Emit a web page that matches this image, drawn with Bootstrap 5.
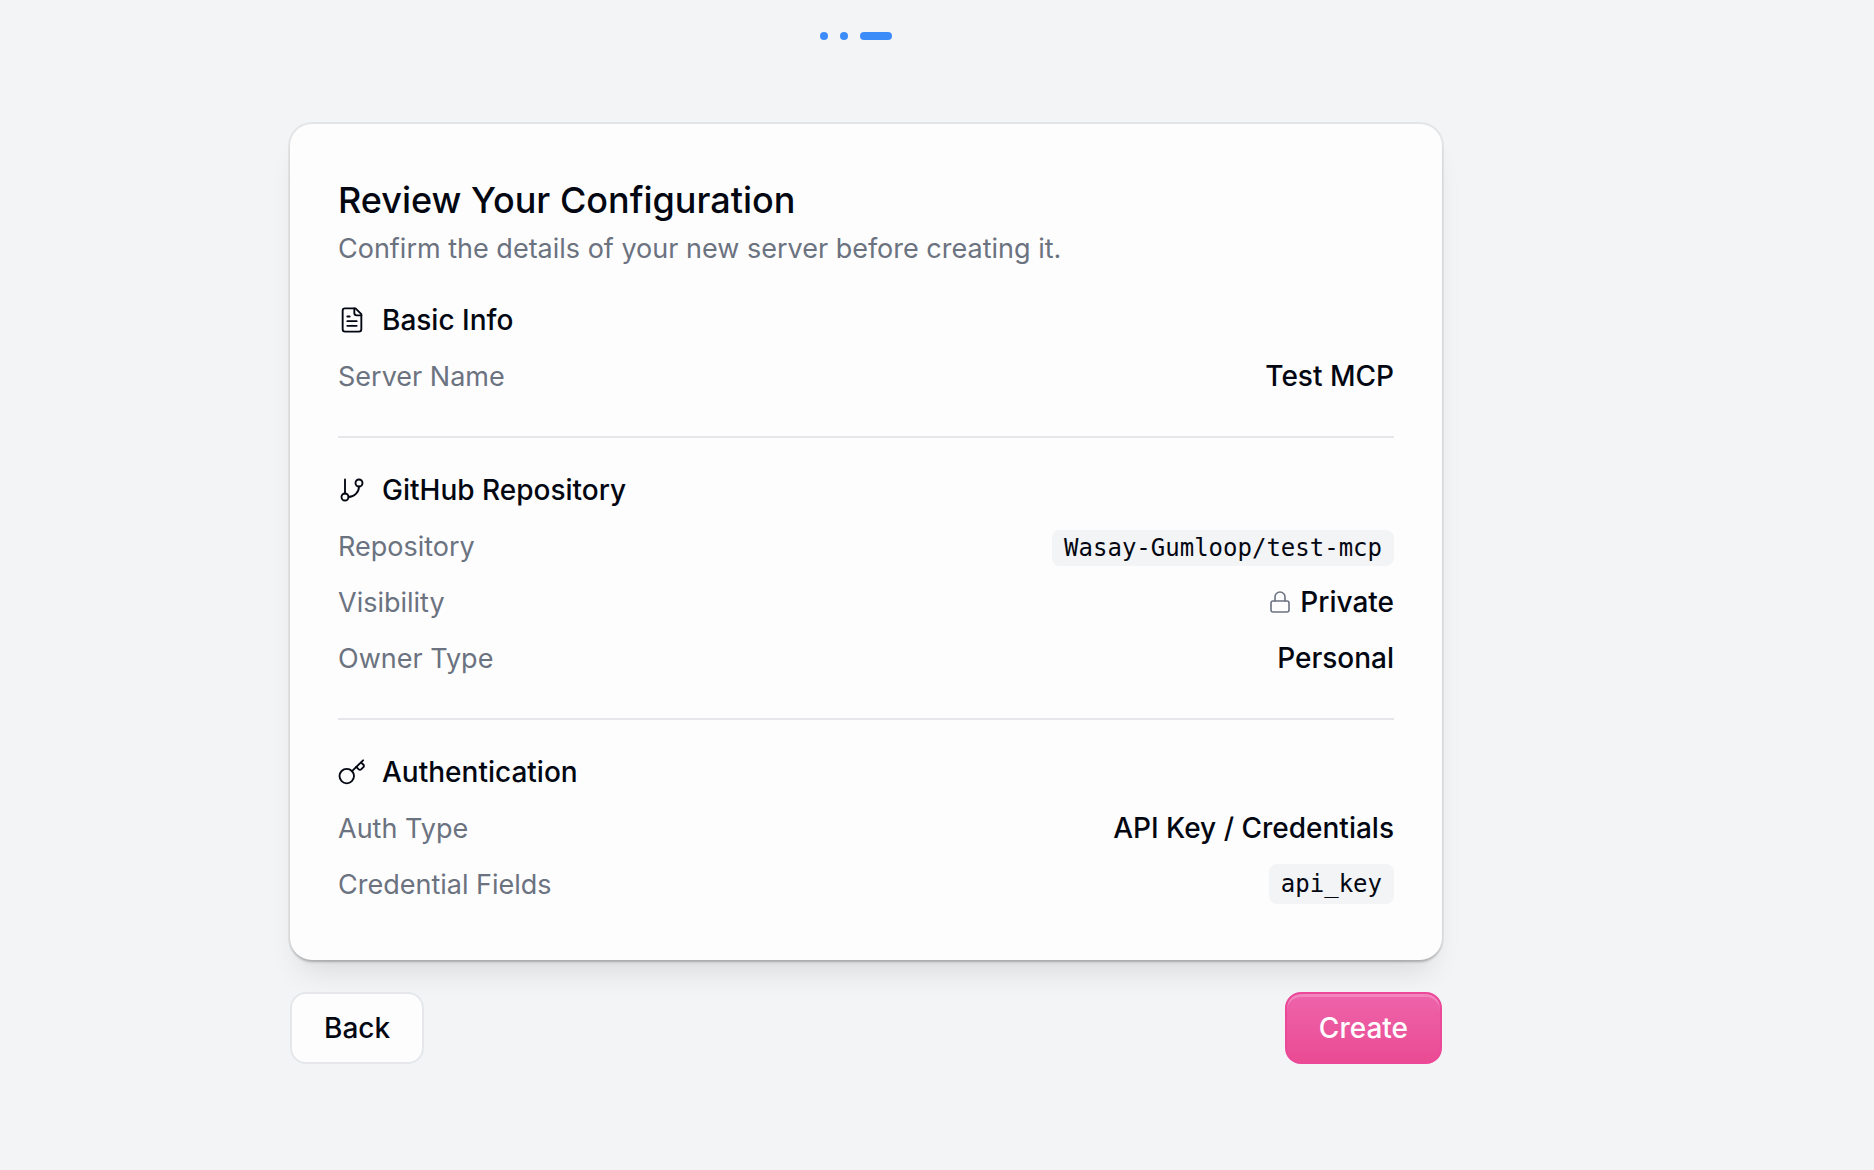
<!DOCTYPE html>
<html lang="en">
<head>
<meta charset="utf-8">
<meta name="viewport" content="width=device-width, initial-scale=1">
<title>Review Your Configuration</title>
<link href="https://cdn.jsdelivr.net/npm/bootstrap@5.3.0/dist/css/bootstrap.min.css" rel="stylesheet">
<style>
  body { background: #f3f4f6; color: #030712; font-family: Inter, "Liberation Sans", sans-serif; font-size: 27px; line-height: 40px; }
  .steps { padding: 32px 162px 0 0; gap: 12px; }
  .step { width: 8px; height: 8px; background: #3b8cf8; }
  .step-current { width: 32px; }
  .wizard { padding: 84px 142px 64px 0; }
  .wizard-inner { width: 100%; max-width: 1152px; }
  .review-card { background: #fdfdfd; border-radius: 22px; padding: 48px 48px 56px; margin-bottom: 32px;
    box-shadow: 0 0 0 2px rgba(0,0,0,.06), 0 3px 3px -1px rgba(0,0,0,.2), 0 20px 30px -10px rgba(0,0,0,.11); }
  .review-title { font-size: 36px; line-height: 56px; font-weight: 500; }
  .review-note { line-height: 42px; margin-bottom: 30px; }
  .soft { color: #6b7280; }
  .section-title { font-size: 28px; line-height: 40px; font-weight: 500; gap: 16px; }
  .review-section + .review-section { border-top: 2px solid #e5e7eb; margin-top: 40px; padding-top: 32px; }
  .line { margin-top: 16px; }
  .line dt { font-weight: 400; line-height: 38px; }
  .line dd { font-size: 28px; font-weight: 500; gap: 8px; }
  .chip { background: #f3f4f6; color: #030712; border-radius: 8px; padding: 0 12px; font: 400 24px/40px "DejaVu Sans Mono", monospace; }
  .chip-slim { line-height: 36px; }
  .ico { width: 28px; height: 28px; fill: none; stroke: currentColor; stroke-width: 1.6; stroke-linecap: round; stroke-linejoin: round; }
  .ico-sm { width: 24px; height: 24px; }
  .act { font-size: 28px; line-height: 40px; font-weight: 500; padding: 14px 32px; border-width: 2px; border-radius: 16px; }
  .act-back { background: #fdfdfd; color: #030712; border-color: #e5e7eb; }
  .act-create { color: #fff; border-color: #ec4899; background: linear-gradient(#ee64ab, #ea4b93) padding-box, #ec4899; box-shadow: inset 0 3px 0 rgba(255,255,255,.22); }
</style>
</head>
<body>
<nav class="steps d-flex justify-content-center" aria-label="Progress">
  <span class="step rounded-pill"></span>
  <span class="step rounded-pill"></span>
  <span class="step step-current rounded-pill"></span>
</nav>
<main class="wizard d-flex justify-content-center">
  <div class="wizard-inner">
    <div class="review-card">
      <h1 class="review-title mb-0">Review Your Configuration</h1>
      <p class="review-note soft">Confirm the details of your new server before creating it.</p>

      <section class="review-section">
        <h2 class="section-title d-flex align-items-center mb-0">
          <svg class="ico" viewBox="0 0 24 24" aria-hidden="true"><path d="M15 2H6a2 2 0 0 0-2 2v16a2 2 0 0 0 2 2h12a2 2 0 0 0 2-2V7Z"/><path d="M14 2v4a2 2 0 0 0 2 2h4"/><path d="M10 9H8"/><path d="M16 13H8"/><path d="M16 17H8"/></svg>
          Basic Info
        </h2>
        <dl class="mb-0">
          <div class="line d-flex justify-content-between align-items-end"><dt class="soft">Server Name</dt><dd class="mb-0">Test MCP</dd></div>
        </dl>
      </section>

      <section class="review-section">
        <h2 class="section-title d-flex align-items-center mb-0">
          <svg class="ico" viewBox="0 0 24 24" aria-hidden="true"><path d="M6 3v12"/><circle cx="18" cy="6" r="3"/><circle cx="6" cy="18" r="3"/><path d="M18 9a9 9 0 0 1-9 9"/></svg>
          GitHub Repository
        </h2>
        <dl class="mb-0">
          <div class="line d-flex justify-content-between align-items-end"><dt class="soft">Repository</dt><dd class="d-flex mb-0 pt-1"><code class="chip chip-slim">Wasay-Gumloop/test-mcp</code></dd></div>
          <div class="line d-flex justify-content-between align-items-end"><dt class="soft">Visibility</dt><dd class="d-flex align-items-center mb-0">
            <svg class="ico ico-sm soft" viewBox="0 0 24 24" aria-hidden="true"><rect x="3" y="11" width="18" height="11" rx="2"/><path d="M7 11V7a5 5 0 0 1 10 0v4"/></svg>
            Private</dd></div>
          <div class="line d-flex justify-content-between align-items-end"><dt class="soft">Owner Type</dt><dd class="mb-0">Personal</dd></div>
        </dl>
      </section>

      <section class="review-section">
        <h2 class="section-title d-flex align-items-center mb-0">
          <svg class="ico" viewBox="0 0 24 24" aria-hidden="true"><circle cx="7.5" cy="15.5" r="6.2"/><path d="M21.5 2 12 11.2"/><path d="m15.6 7.6 2.2 2.2a1.4 1.4 0 0 0 2 0l2-2a1.4 1.4 0 0 0 0-2l-1.9-1.9"/></svg>
          Authentication
        </h2>
        <dl class="mb-0">
          <div class="line d-flex justify-content-between align-items-end"><dt class="soft">Auth Type</dt><dd class="mb-0">API Key / Credentials</dd></div>
          <div class="line d-flex justify-content-between align-items-end"><dt class="soft">Credential Fields</dt><dd class="d-flex mb-0"><code class="chip">api_key</code></dd></div>
        </dl>
      </section>
    </div>

    <div class="d-flex justify-content-between">
      <button type="button" class="btn act act-back">Back</button>
      <button type="button" class="btn act act-create">Create</button>
    </div>
  </div>
</main>
<script src="https://cdn.jsdelivr.net/npm/bootstrap@5.3.0/dist/js/bootstrap.bundle.min.js"></script>
</body>
</html>
